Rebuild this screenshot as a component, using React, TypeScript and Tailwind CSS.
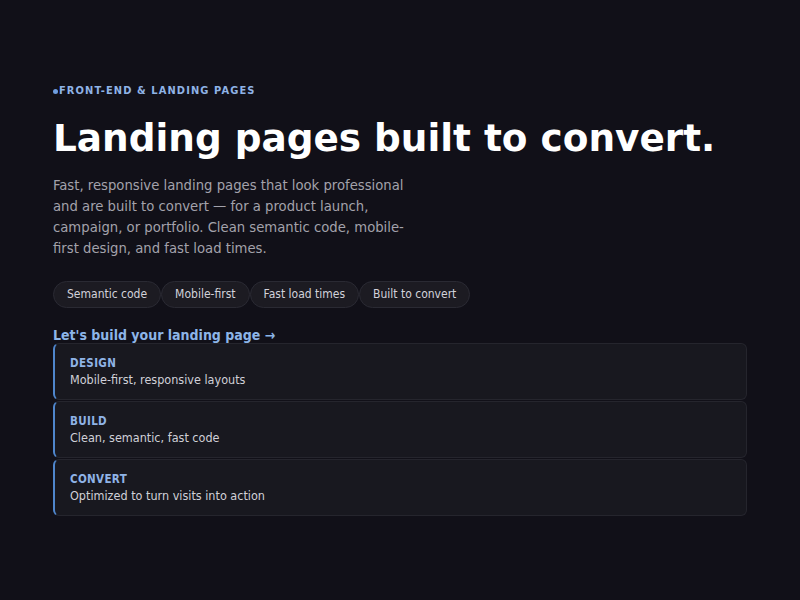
const chips = ['Semantic code', 'Mobile-first', 'Fast load times', 'Built to convert'];

const steps = [
  { title: 'Design', text: 'Mobile-first, responsive layouts' },
  { title: 'Build', text: 'Clean, semantic, fast code' },
  { title: 'Convert', text: 'Optimized to turn visits into action' },
];

const App = () => {
  return (
    <div className="min-h-[600px] bg-[#111018] px-[53px] pt-[83px] font-['DejaVu_Sans_Condensed','DejaVu_Sans',sans-serif]">
      <div className="flex items-center gap-[1px] text-[11px] font-bold uppercase tracking-[0.1em] text-[#8fb3e6]">
        <span className="inline-block h-[5px] w-[5px] rounded-full bg-[#6f9ee0]" />
        Front-end &amp; Landing pages
      </div>
      <h1 className="mt-[12px] font-['DejaVu_Sans',sans-serif] text-[37.4px] font-bold leading-[52px] text-white">
        Landing pages built to convert.
      </h1>
      <p className="mt-[10px] w-[372px] text-[14.7px] leading-[21px] text-[#a3a2ab]">
        Fast, responsive landing pages that look professional and are built to convert — for a product launch,
        campaign, or portfolio. Clean semantic code, mobile-first design, and fast load times.
      </p>
      <div className="mt-[23px] flex">
        {chips.map((c) => (
          <span
            key={c}
            className="rounded-full border border-[#2a2a33] bg-[#1c1b22] px-[13px] py-[4px] text-[12px] leading-[17px] text-[#d2d2da]"
          >
            {c}
          </span>
        ))}
      </div>
      <a href="#" className="mt-[18px] block text-[14px] font-bold leading-[18px] text-[#8db5e8]">
        Let's build your landing page →
      </a>
      <div className="-mt-[1px] flex flex-col gap-[1px]">
        {steps.map((s) => (
          <div
            key={s.title}
            className="rounded-[6px] border border-l-2 border-[#25252d] border-l-[#4f86cc] bg-[#18181f] px-[15px] pb-[11px] pt-[12px]"
          >
            <div className="text-[11.5px] font-bold uppercase leading-[15px] tracking-[0.03em] text-[#8fb3e6]">
              {s.title}
            </div>
            <div className="text-[12.5px] leading-[17px] text-[#d0d0d8]">{s.text}</div>
          </div>
        ))}
      </div>
    </div>
  );
};

export default App;
